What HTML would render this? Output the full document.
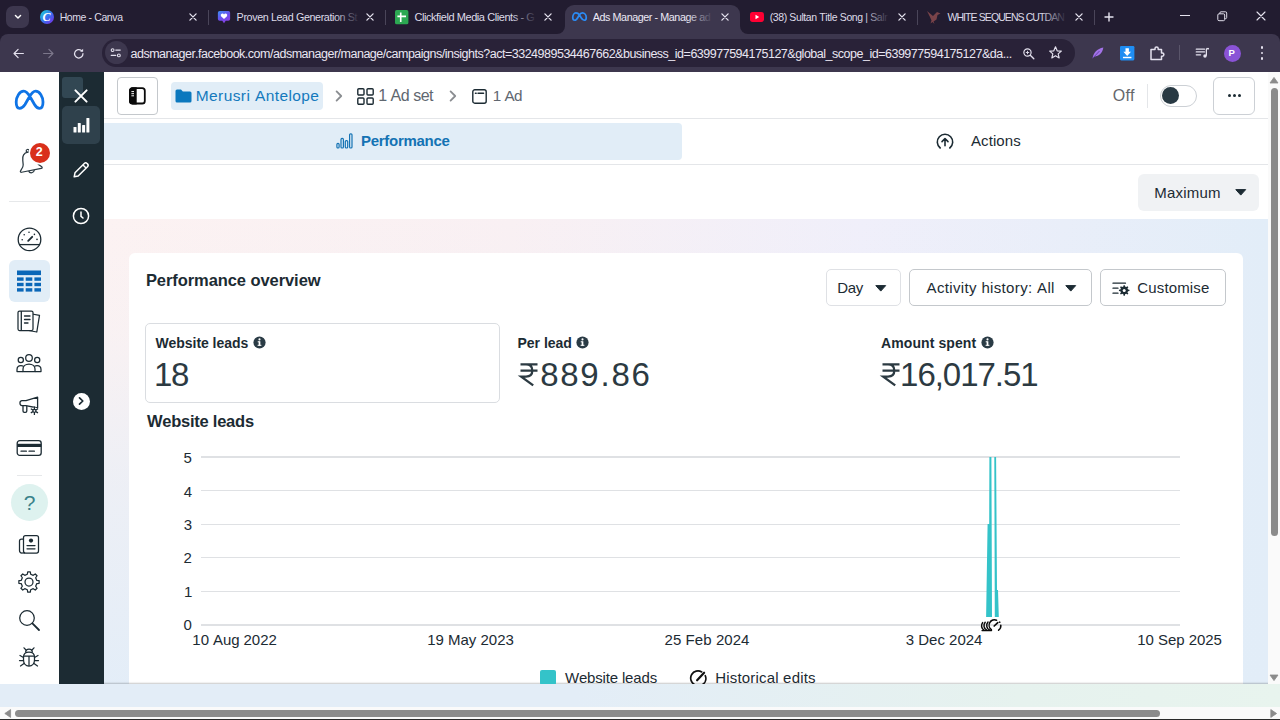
<!DOCTYPE html>
<html><head><meta charset="utf-8"><title>Ads Manager</title>
<style>
html,body{margin:0;padding:0;width:1280px;height:720px;overflow:hidden;background:#fff;font-family:"Liberation Sans",sans-serif;}
.a{position:absolute;}
.t{position:absolute;white-space:nowrap;font-kerning:none;font-variant-ligatures:none;font-family:"Liberation Sans",sans-serif;}
svg{position:absolute;overflow:visible;}
</style></head><body>
<div class="a" style="left:0;top:0;width:1280px;height:33.5px;background:#221c30"></div>
<div class="a" style="left:0;top:33.5px;width:1280px;height:38.7px;background:#3d374e"></div>
<div class="a" style="left:0;top:34px;width:8px;height:8px;background:#221c30"></div><div class="a" style="left:0;top:34px;width:16px;height:16px;border-radius:8px 0 0 0;background:#3d374e"></div>
<div class="a" style="left:1272px;top:34px;width:8px;height:8px;background:#221c30"></div><div class="a" style="left:1264px;top:34px;width:16px;height:16px;border-radius:0 8px 0 0;background:#3d374e"></div>
<div class="a" style="left:6px;top:6px;width:23px;height:22px;border-radius:7px;background:#3d374e"></div>
<svg style="left:13.6px;top:13.8px" width="8" height="6" viewBox="0 0 11 8"><path d="M2 1.8 L5.5 5.3 L9 1.8" fill="none" stroke="#fff" stroke-width="2" stroke-linecap="round" stroke-linejoin="round"/></svg>
<div class="a" style="left:565px;top:5px;width:175px;height:29px;border-radius:9px 9px 0 0;background:#3d374e"></div>
<svg style="left:557px;top:26px" width="8" height="8"><path d="M8 0 V8 H0 A8 8 0 0 0 8 0Z" fill="#3d374e"/></svg>
<svg style="left:740px;top:26px" width="8" height="8"><path d="M0 0 V8 H8 A8 8 0 0 1 0 0Z" fill="#3d374e"/></svg>
<div class="a" style="left:208px;top:10px;width:1px;height:15px;background:#4a4559"></div>
<div class="a" style="left:385px;top:10px;width:1px;height:15px;background:#4a4559"></div>
<div class="a" style="left:917px;top:10px;width:1px;height:15px;background:#4a4559"></div>
<div class="a" style="left:1094px;top:10px;width:1px;height:15px;background:#4a4559"></div>
<span class="t" style="left:59.64px;top:12.31px;font-size:10.5px;line-height:10.5px;font-weight:400;color:#dedbe8;letter-spacing:-0.394px;">Home - Canva</span>
<span class="t" style="left:236.62px;top:12.10px;font-size:10.75px;line-height:10.75px;font-weight:400;color:#dedbe8;letter-spacing:-0.388px;">Proven Lead Generation St</span>
<div class="a" style="left:334px;top:8px;width:26px;height:18px;background:linear-gradient(90deg,rgba(0,0,0,0),#221c30)"></div>
<span class="t" style="left:414.44px;top:11.89px;font-size:11.0px;line-height:11.0px;font-weight:400;color:#dedbe8;letter-spacing:-0.432px;">Clickfield Media Clients - G</span>
<div class="a" style="left:511px;top:8px;width:26px;height:18px;background:linear-gradient(90deg,rgba(0,0,0,0),#221c30)"></div>
<span class="t" style="left:592.78px;top:12.10px;font-size:10.75px;line-height:10.75px;font-weight:400;color:#ece9f5;letter-spacing:-0.426px;">Ads Manager - Manage ad</span>
<div class="a" style="left:687px;top:8px;width:26px;height:18px;background:linear-gradient(90deg,rgba(0,0,0,0),#3d374e)"></div>
<span class="t" style="left:769.65px;top:12.31px;font-size:10.5px;line-height:10.5px;font-weight:400;color:#dedbe8;letter-spacing:-0.384px;">(38) Sultan Title Song | Salr</span>
<div class="a" style="left:864px;top:8px;width:26px;height:18px;background:linear-gradient(90deg,rgba(0,0,0,0),#221c30)"></div>
<span class="t" style="left:947.45px;top:12.31px;font-size:10.5px;line-height:10.5px;font-weight:400;color:#dedbe8;letter-spacing:-0.913px;">WHITE SEQUENS CUTDAN</span>
<div class="a" style="left:1041px;top:8px;width:26px;height:18px;background:linear-gradient(90deg,rgba(0,0,0,0),#221c30)"></div>
<svg style="left:186.5px;top:11px" width="12" height="12" viewBox="-6 -6 12 12"><path d="M-3.1 -3.1 L3.1 3.1 M3.1 -3.1 L-3.1 3.1" stroke="#e6e3ef" stroke-width="1.3" stroke-linecap="round" fill="none"/></svg>
<svg style="left:364px;top:11px" width="12" height="12" viewBox="-6 -6 12 12"><path d="M-3.1 -3.1 L3.1 3.1 M3.1 -3.1 L-3.1 3.1" stroke="#e6e3ef" stroke-width="1.3" stroke-linecap="round" fill="none"/></svg>
<svg style="left:542px;top:11px" width="12" height="12" viewBox="-6 -6 12 12"><path d="M-3.1 -3.1 L3.1 3.1 M3.1 -3.1 L-3.1 3.1" stroke="#e6e3ef" stroke-width="1.3" stroke-linecap="round" fill="none"/></svg>
<svg style="left:719px;top:11px" width="12" height="12" viewBox="-6 -6 12 12"><path d="M-3.1 -3.1 L3.1 3.1 M3.1 -3.1 L-3.1 3.1" stroke="#e6e3ef" stroke-width="1.3" stroke-linecap="round" fill="none"/></svg>
<svg style="left:896px;top:11px" width="12" height="12" viewBox="-6 -6 12 12"><path d="M-3.1 -3.1 L3.1 3.1 M3.1 -3.1 L-3.1 3.1" stroke="#e6e3ef" stroke-width="1.3" stroke-linecap="round" fill="none"/></svg>
<svg style="left:1073px;top:11px" width="12" height="12" viewBox="-6 -6 12 12"><path d="M-3.1 -3.1 L3.1 3.1 M3.1 -3.1 L-3.1 3.1" stroke="#e6e3ef" stroke-width="1.3" stroke-linecap="round" fill="none"/></svg>
<svg style="left:1103px;top:11px" width="12" height="12" viewBox="-6 -6 12 12"><path d="M-4 0 H4 M0 -4 V4" stroke="#e6e3ef" stroke-width="1.4" stroke-linecap="round"/></svg>
<div class="a" style="left:1180px;top:15px;width:10px;height:1px;background:#e6e3ef"></div>
<svg style="left:1217.2px;top:10.8px" width="10.5" height="10.5" viewBox="0 0 13 13"><rect x="1" y="3.5" width="8.5" height="8.5" rx="1.5" fill="none" stroke="#e6e3ef" stroke-width="1.2"/><path d="M3.5 3.5 V2.5 A1.5 1.5 0 0 1 5 1 H10.5 A1.5 1.5 0 0 1 12 2.5 V8 A1.5 1.5 0 0 1 10.5 9.5 H9.5" fill="none" stroke="#e6e3ef" stroke-width="1.2"/></svg>
<svg style="left:1255.2px;top:10.3px" width="12" height="12" viewBox="-6 -6 12 12"><path d="M-4 -4 L4 4 M4 -4 L-4 4" stroke="#e6e3ef" stroke-width="1.1" stroke-linecap="round" fill="none"/></svg>
<div class="a" style="left:39.5px;top:10.2px;width:14px;height:14px;border-radius:50%;background:linear-gradient(135deg,#1ec8d8 10%,#3b6af0 55%,#7a2fe6 95%)"></div>
<span class="t" style="left:42.6px;top:9.8px;font-family:'Liberation Serif',serif;font-style:italic;font-weight:700;font-size:12px;line-height:14px;color:#fff">C</span>
<svg style="left:217.2px;top:9.6px" width="14" height="14.4" viewBox="0 0 16 16"><defs><linearGradient id="pl" x1="0" y1="0" x2="0.6" y2="1"><stop offset="0" stop-color="#3c8df2"/><stop offset=".55" stop-color="#6a4fee"/><stop offset="1" stop-color="#8a3fe0"/></linearGradient></defs><path d="M3 1 H13 A2 2 0 0 1 15 3 V10 A2 2 0 0 1 13 12 H10 L8 15 L6 12 H3 A2 2 0 0 1 1 10 V3 A2 2 0 0 1 3 1Z" fill="url(#pl)"/><path d="M8 10.2 L4.6 6.8 A1.9 1.9 0 0 1 8 4.8 A1.9 1.9 0 0 1 11.4 6.8Z" fill="#fff"/></svg>
<svg style="left:395px;top:9.7px" width="13.4" height="14.4" viewBox="0 0 14 15"><rect x="0" y="0" width="14" height="15" rx="1.8" fill="#2ca852"/><path d="M2.5 6.6 H11.5 M6 2.6 V12.4" stroke="#fff" stroke-width="1.7"/></svg>
<svg style="left:572px;top:10px" width="15" height="13" viewBox="0 1.5 20 13"><path d="M5.2 3.2 C2.6 3.2 1 6.3 1 9.4 C1 11.6 2 13 3.7 13 C5.4 13 6.5 11.6 8.2 8.6 L9.3 6.7 C10.6 4.5 11.9 3.2 13.9 3.2 C16.7 3.2 19 6.1 19 9.6 C19 11.7 17.9 13 16.2 13 C14.6 13 13.7 12.1 12.2 9.6 L10 6 C8.6 3.9 7.2 3.2 5.2 3.2Z" fill="none" stroke="#2b8cf5" stroke-width="2.3" stroke-linejoin="round"/></svg>
<svg style="left:750px;top:12px" width="14" height="10" viewBox="0 0 17 12"><rect x="0" y="0" width="17" height="12" rx="3.2" fill="#ff0033"/><path d="M6.7 3.3 L11.2 6 L6.7 8.7Z" fill="#fff"/></svg>
<svg style="left:926px;top:9px" width="16" height="16" viewBox="0 0 16 16"><path d="M1 2 L7 7 L11 3 L14.5 4.5 L11.5 6 L10.5 10.5 L7.5 12.5 L8.5 15 L6.5 13 L4.5 14.5 L5.5 11.5 L4 8 Z" fill="#7a4349"/></svg>
<svg style="left:12px;top:46.8px" width="13" height="13" viewBox="0 0 16 16"><path d="M14 8 H3 M7.5 3 L2.5 8 L7.5 13" fill="none" stroke="#e4e1ee" stroke-width="1.5" stroke-linecap="round" stroke-linejoin="round"/></svg>
<svg style="left:41.5px;top:46.8px" width="13" height="13" viewBox="0 0 16 16"><path d="M2 8 H13 M8.5 3 L13.5 8 L8.5 13" fill="none" stroke="#7c778b" stroke-width="1.5" stroke-linecap="round" stroke-linejoin="round"/></svg>
<svg style="left:71.8px;top:46.5px" width="13.5" height="13.5" viewBox="0 0 16 16"><path d="M13 8 A5 5 0 1 1 11.2 4.2" fill="none" stroke="#e4e1ee" stroke-width="1.5" stroke-linecap="round"/><path d="M13.2 2 V5.6 H9.6Z" fill="#e4e1ee"/></svg>
<div class="a" style="left:102px;top:38.8px;width:972.5px;height:28.2px;border-radius:14.1px;background:#292238"></div>
<div class="a" style="left:104.5px;top:41.3px;width:23px;height:23px;border-radius:12px;background:#3d374e"></div>
<svg style="left:110px;top:47.2px" width="11.5" height="11.5" viewBox="0 0 14 14"><circle cx="3.2" cy="3.8" r="1.7" fill="none" stroke="#e4e1ee" stroke-width="1.3"/><path d="M7 3.8 H12.5" stroke="#e4e1ee" stroke-width="1.4" stroke-linecap="round"/><circle cx="10.8" cy="10.2" r="1.7" fill="none" stroke="#e4e1ee" stroke-width="1.3"/><path d="M1.5 10.2 H7" stroke="#e4e1ee" stroke-width="1.4" stroke-linecap="round"/></svg>
<span class="t" style="left:130.47px;top:47.62px;font-size:12.5px;line-height:12.5px;font-weight:400;color:#e9e6f2;letter-spacing:-0.490px;">adsmanager.facebook.com/adsmanager/manage/campaigns/insights?act=3324989534467662&amp;business_id=639977594175127&amp;global_scope_id=639977594175127&amp;da...</span>
<svg style="left:1022px;top:46.5px" width="13.5" height="13.5" viewBox="0 0 16 16"><circle cx="6.5" cy="6.5" r="4.3" fill="none" stroke="#e4e1ee" stroke-width="1.4"/><path d="M9.8 9.8 L14 14" stroke="#e4e1ee" stroke-width="1.6" stroke-linecap="round"/><path d="M4.5 6.5 H8.5 M6.5 4.5 V8.5" stroke="#e4e1ee" stroke-width="1.1"/></svg>
<svg style="left:1047.6px;top:45.4px" width="15" height="15" viewBox="0 0 18 18"><path d="M9 2.2 L11 7 L16 7.4 L12.2 10.7 L13.4 15.6 L9 13 L4.6 15.6 L5.8 10.7 L2 7.4 L7 7Z" fill="none" stroke="#e4e1ee" stroke-width="1.4" stroke-linejoin="round"/></svg>
<svg style="left:1089.5px;top:45px" width="15.5" height="15.5" viewBox="0 0 18 18"><path d="M3 15.5 C4 9 8 4.5 15.5 3 C14.5 9.5 10.5 13 5 13.5 L3 15.5Z" fill="#a373e8"/><path d="M3 15.5 L11 7" stroke="#5a3aa0" stroke-width="1"/></svg>
<svg style="left:1120px;top:45.6px" width="14.4" height="14.4" viewBox="0 0 17 16" preserveAspectRatio="none"><rect width="17" height="16" rx="1.5" fill="#1f8df2"/><path d="M6.5 2.5 H10.5 V6.5 H13 L8.5 11 L4 6.5 H6.5Z" fill="#fff"/><rect x="3.5" y="12" width="10" height="1.6" fill="#fff"/></svg>
<svg style="left:1148px;top:44px" width="18" height="18" viewBox="0 0 18 18"><path d="M3 5.5 H7 V4.5 A1.6 1.6 0 0 1 10.2 4.5 V5.5 H13.5 V9 H14.3 A1.6 1.6 0 0 1 14.3 12.2 H13.5 V15.5 H3Z" fill="none" stroke="#e4e1ee" stroke-width="1.5" stroke-linejoin="round"/></svg>
<div class="a" style="left:1179px;top:45px;width:1px;height:15px;background:#5a556a"></div>
<svg style="left:1195px;top:46px" width="15.5" height="14" viewBox="0 0 18 16"><path d="M1.5 3.5 H11 M1.5 6.8 H11 M1.5 10.1 H6.5" stroke="#e4e1ee" stroke-width="1.5" stroke-linecap="round"/><path d="M13.2 3 V11.2" stroke="#e4e1ee" stroke-width="1.5"/><path d="M13.2 3 H16.2" stroke="#e4e1ee" stroke-width="1.8"/><circle cx="11.6" cy="11.4" r="2" fill="#e4e1ee"/></svg>
<div class="a" style="left:1223.5px;top:44.5px;width:17px;height:17px;border-radius:50%;background:#8a53d6"></div>
<span class="t" style="left:1228.56px;top:48.36px;font-size:9.5px;line-height:9.5px;font-weight:700;color:#fff;letter-spacing:0.000px;">P</span>
<div class="a" style="left:1260.5px;top:46.3px;width:2.6px;height:2.6px;border-radius:50%;background:#e4e1ee"></div>
<div class="a" style="left:1260.5px;top:51.8px;width:2.6px;height:2.6px;border-radius:50%;background:#e4e1ee"></div>
<div class="a" style="left:1260.5px;top:57.3px;width:2.6px;height:2.6px;border-radius:50%;background:#e4e1ee"></div>
<div class="a" style="left:0;top:72px;width:1280px;height:648px;background:#fff"></div>
<div class="a" style="left:104px;top:219px;width:1164px;height:465px;background:linear-gradient(90deg,#fcf2f2 0%,#f9f0f3 35%,#f0effa 65%,#e2edf8 100%)"></div>
<div class="a" style="left:104px;top:219px;width:1164px;height:465px;background:linear-gradient(180deg,rgba(226,237,248,0) 0%,rgba(226,237,248,.12) 25%,rgba(226,237,248,.55) 55%,rgba(226,237,248,.95) 100%)"></div>
<div class="a" style="left:129px;top:253px;width:1114px;height:440px;border-radius:6px 6px 0 0;background:#fff"></div>
<div class="a" style="left:0;top:684px;width:1280px;height:23px;background:linear-gradient(90deg,#e3edf7 0%,#e3edf7 45%,#e6f2ee 80%,#e8f4ee 100%);box-shadow:0 -1px 1.5px rgba(0,0,0,.22)"></div>
<div class="a" style="left:0;top:707px;width:1280px;height:13px;background:#fafafa"></div>
<div class="a" style="left:15px;top:709.8px;width:1145px;height:7px;border-radius:3.5px;background:#8b8b8b"></div>
<svg style="left:3.5px;top:709px" width="8" height="9"><path d="M6.6 0.6 V8.4 L0.8 4.5Z" fill="#8b8b8b" stroke="#8b8b8b" stroke-width=".8" stroke-linejoin="round"/></svg>
<svg style="left:1269.5px;top:709px" width="8" height="9"><path d="M0.8 0.6 V8.4 L6.6 4.5Z" fill="#8b8b8b" stroke="#8b8b8b" stroke-width=".8" stroke-linejoin="round"/></svg>
<div class="a" style="left:0;top:719px;width:1280px;height:1px;background:#2a2a2a"></div>
<div class="a" style="left:1268px;top:72px;width:12px;height:612px;background:#fafafa"></div>
<div class="a" style="left:1270.5px;top:88px;width:7px;height:448px;border-radius:3.5px;background:#8b8b8b"></div>
<svg style="left:1269px;top:76px" width="10" height="8"><path d="M1 7 H9 L5 1.4Z" fill="#8b8b8b" stroke="#8b8b8b" stroke-width=".8" stroke-linejoin="round"/></svg>
<svg style="left:1269px;top:673.6px" width="10" height="8"><path d="M1 1 H9 L5 6.6Z" fill="#8b8b8b" stroke="#8b8b8b" stroke-width=".8" stroke-linejoin="round"/></svg>
<div class="a" style="left:0;top:72px;width:59px;height:612px;background:#fff"></div>
<svg style="left:0px;top:0px" width="60" height="120" viewBox="0 0 60 120"><path d="M19.6 108.3 C17.3 108.3 16.2 105.5 16.2 102 C16.2 97 19.5 91.2 23.7 91.2 C26.5 91.2 28.5 94 30.5 97.5 L34.5 104.5 C36 107 37.5 108.3 39.6 108.3 C42 108.3 43 105.5 43 102 C43 97 39.8 91.2 35.6 91.2 C32.8 91.2 31 94 29 97.5 L25 104.5 C23.4 107 21.8 108.3 19.6 108.3Z" fill="none" stroke="#0f74e6" stroke-width="2.8" stroke-linejoin="round"/></svg>
<svg style="left:17.3px;top:147.5px" width="26" height="30" viewBox="0 0 26 30"><g transform="rotate(-11 13 15) translate(13 15) scale(1.1) translate(-13 -15)" fill="none" stroke="#2b3a42" stroke-width="1.15" stroke-linejoin="round"><path d="M13 5 C9 5 7.2 8.2 7 11.5 L6.6 15.5 C6.4 17.5 4.6 19 3.2 20.4 C2.6 21 3 21.8 3.9 21.8 H22.1 C23 21.8 23.4 21 22.8 20.4 C21.4 19 19.6 17.5 19.4 15.5 L19 11.5 C18.8 8.2 17 5 13 5Z"/><circle cx="13" cy="3.8" r="1.3"/><path d="M10.4 22 A2.7 2.7 0 0 0 15.6 22"/></g></svg>
<div class="a" style="left:29.5px;top:142.5px;width:20px;height:20px;border-radius:50%;background:#d9301b;box-shadow:0 0 0 1.5px #fff"></div>
<span class="t" style="left:35.87px;top:146.22px;font-size:12.5px;line-height:12.5px;font-weight:700;color:#fff;letter-spacing:0.000px;">2</span>
<div class="a" style="left:9px;top:201px;width:41px;height:1px;background:#e6e8ea"></div>
<svg style="left:16px;top:226px" width="27" height="27" viewBox="0 0 27 27"><circle cx="13.5" cy="13.4" r="11.3" fill="none" stroke="#1c2b33" stroke-width="1.3"/><path d="M3.4 18.6 H23.6" stroke="#1c2b33" stroke-width="1.3"/><path d="M12.2 14.8 L16.2 10.8" stroke="#1c2b33" stroke-width="1.9" stroke-linecap="round"/><g fill="#1c2b33"><circle cx="6.2" cy="13.8" r=".8"/><circle cx="8.2" cy="8.8" r=".8"/><circle cx="13" cy="6.2" r=".8"/><circle cx="18.4" cy="8.4" r=".8"/><circle cx="21" cy="13.4" r=".8"/></g></svg>
<div class="a" style="left:9px;top:260px;width:41px;height:42px;border-radius:6px;background:#e1edf7"></div>
<svg style="left:17px;top:270px" width="24" height="23" viewBox="0 0 24 23"><rect x="0" y="0.5" width="24" height="4.6" fill="#0b67b8"/><rect x="0" y="7.4" width="6.6" height="3.4" fill="#0b67b8"/><rect x="8.7" y="7.4" width="6.6" height="3.4" fill="#0b67b8"/><rect x="17.4" y="7.4" width="6.6" height="3.4" fill="#0b67b8"/><rect x="0" y="12.8" width="6.6" height="3.4" fill="#0b67b8"/><rect x="8.7" y="12.8" width="6.6" height="3.4" fill="#0b67b8"/><rect x="17.4" y="12.8" width="6.6" height="3.4" fill="#0b67b8"/><rect x="0" y="18.2" width="6.6" height="3.4" fill="#0b67b8"/><rect x="8.7" y="18.2" width="6.6" height="3.4" fill="#0b67b8"/><rect x="17.4" y="18.2" width="6.6" height="3.4" fill="#0b67b8"/></svg>
<svg style="left:15px;top:308px" width="28" height="28" viewBox="0 0 28 28"><path d="M17 6 L24.5 7.4 L21.8 24 L11 22" fill="none" stroke="#1c2b33" stroke-width="1.25" stroke-linejoin="round"/><rect x="3" y="3" width="15" height="19.5" rx="1.5" fill="#fff" stroke="#1c2b33" stroke-width="1.25"/><path d="M6.3 3 V22.5" stroke="#1c2b33" stroke-width="1.3"/><path d="M9.5 8 H15 M9.5 11.5 H15 M9.5 15 H13" stroke="#1c2b33" stroke-width="1.3" stroke-linecap="round"/></svg>
<svg style="left:15px;top:352px" width="28" height="22" viewBox="0 0 28 22"><circle cx="14" cy="6" r="3.3" fill="none" stroke="#1c2b33" stroke-width="1.25"/><circle cx="5.8" cy="8" r="2.6" fill="none" stroke="#1c2b33" stroke-width="1.25"/><circle cx="22.2" cy="8" r="2.6" fill="none" stroke="#1c2b33" stroke-width="1.25"/><path d="M8 19.5 V17 C8 14 10.5 12 14 12 C17.5 12 20 14 20 17 V19.5Z" fill="none" stroke="#1c2b33" stroke-width="1.25" stroke-linejoin="round"/><path d="M8 19.5 H2 V17.5 C2 15 3.8 13.5 6 13.5 C7 13.5 7.8 13.8 8.5 14.2 M20 19.5 H26 V17.5 C26 15 24.2 13.5 22 13.5 C21 13.5 20.2 13.8 19.5 14.2" fill="none" stroke="#1c2b33" stroke-width="1.25" stroke-linejoin="round"/></svg>
<svg style="left:18px;top:394px" width="24" height="24" viewBox="0 0 24 24"><path d="M4 6.6 H8 L19.6 3.2 V14 L8 11.6 H4 C2.9 11.6 2 10.7 2 9.6 V8.6 C2 7.5 2.9 6.6 4 6.6Z" fill="none" stroke="#1c2b33" stroke-width="1.3" stroke-linejoin="round"/><path d="M5 11.8 V17 C5 17.8 5.6 18.4 6.4 18.4 H7.4 C8.2 18.4 8.8 17.8 8.8 17 V12" fill="none" stroke="#1c2b33" stroke-width="1.3" stroke-linejoin="round"/><g transform="translate(16.4 16.8)"><circle r="3.4" fill="#fff"/><circle r="2.1" fill="#1c2b33"/><path d="M0 -4.2 V4.2 M-3.6 -2.1 L3.6 2.1 M-3.6 2.1 L3.6 -2.1" stroke="#1c2b33" stroke-width="1.25"/><circle r=".9" fill="#fff"/></g></svg>
<svg style="left:16px;top:438px" width="26" height="20" viewBox="0 0 26 20"><rect x="1.2" y="2.6" width="24" height="14.8" rx="2.6" fill="none" stroke="#1c2b33" stroke-width="1.3"/><rect x="1.2" y="5.8" width="24" height="3.2" fill="#1c2b33"/><path d="M5 13.2 H10.4 M13 13.2 H18.4" stroke="#1c2b33" stroke-width="1.25" stroke-linecap="round"/></svg>
<div class="a" style="left:17px;top:475px;width:25px;height:1px;background:#e6e8ea"></div>
<div class="a" style="left:11px;top:484px;width:37px;height:37px;border-radius:50%;background:#def2ef"></div>
<span class="t" style="left:23.74px;top:491.72px;font-size:21px;line-height:21px;font-weight:400;color:#3a828a;letter-spacing:0.000px;">?</span>
<svg style="left:17px;top:532px" width="24" height="24" viewBox="0 0 24 24"><path d="M6.5 7 H4.5 C3.4 7 2.5 7.9 2.5 9 V18.5 C2.5 19.9 3.6 21 5 21" fill="none" stroke="#1c2b33" stroke-width="1.25"/><rect x="6.5" y="3.5" width="15" height="17.5" rx="2" fill="none" stroke="#1c2b33" stroke-width="1.25"/><path d="M5 21 H8" stroke="#1c2b33" stroke-width="1.25"/><circle cx="14" cy="8.6" r="2.1" fill="#1c2b33"/><path d="M10 13.5 H18 M10 16.8 H18" stroke="#1c2b33" stroke-width="1.25" stroke-linecap="round"/></svg>
<svg style="left:17px;top:570px" width="24" height="24" viewBox="0 0 24 24"><path d="M10.28 4.29 L10.72 1.88 L13.28 1.88 L13.72 4.29 L16.23 5.33 L18.25 3.94 L20.06 5.75 L18.67 7.77 L19.71 10.28 L22.12 10.72 L22.12 13.28 L19.71 13.72 L18.67 16.23 L20.06 18.25 L18.25 20.06 L16.23 18.67 L13.72 19.71 L13.28 22.12 L10.72 22.12 L10.28 19.71 L7.77 18.67 L5.75 20.06 L3.94 18.25 L5.33 16.23 L4.29 13.72 L1.88 13.28 L1.88 10.72 L4.29 10.28 L5.33 7.77 L3.94 5.75 L5.75 3.94 L7.77 5.33Z" fill="none" stroke="#1c2b33" stroke-width="1.25" stroke-linejoin="round"/><circle cx="12" cy="12" r="4" fill="none" stroke="#1c2b33" stroke-width="1.25"/></svg>
<svg style="left:17px;top:608px" width="24" height="24" viewBox="0 0 24 24"><circle cx="10" cy="10" r="7.3" fill="none" stroke="#1c2b33" stroke-width="1.25"/><path d="M15.4 15.4 L22 22" stroke="#1c2b33" stroke-width="1.8" stroke-linecap="round"/></svg>
<svg style="left:17px;top:645px" width="24" height="24" viewBox="0 0 24 24"><path d="M6.5 12 C6.5 8.5 8.8 7 12 7 C15.2 7 17.5 8.5 17.5 12 V15 C17.5 18.5 15.2 21 12 21 C8.8 21 6.5 18.5 6.5 15Z" fill="none" stroke="#1c2b33" stroke-width="1.25"/><path d="M12 10.5 V21 M6.8 11 H17.2" stroke="#1c2b33" stroke-width="1.25"/><path d="M8.6 7.6 C8.6 5.5 10 4 12 4 C14 4 15.4 5.5 15.4 7.6" fill="none" stroke="#1c2b33" stroke-width="1.25"/><path d="M6.5 12.5 L3 10.5 M6.5 15.5 H2.5 M7 18.5 L3.5 21 M17.5 12.5 L21 10.5 M17.5 15.5 H21.5 M17 18.5 L20.5 21 M9 5 L7 2.8 M15 5 L17 2.8" stroke="#1c2b33" stroke-width="1.25" stroke-linecap="round"/></svg>
<div class="a" style="left:59px;top:72px;width:45px;height:612px;background:#1c2b33"></div>
<div class="a" style="left:62px;top:77px;width:21px;height:21px;border-radius:3px;background:#324753"></div>
<svg style="left:73px;top:88px" width="16" height="16" viewBox="-8 -8 16 16"><path d="M-5.6 -5.6 L5.6 5.6 M5.6 -5.6 L-5.6 5.6" stroke="#fff" stroke-width="2" stroke-linecap="round"/></svg>
<div class="a" style="left:62px;top:106px;width:38px;height:38px;border-radius:5px;background:#2f414c"></div>
<svg style="left:73px;top:117px" width="17" height="16" viewBox="0 0 17 16"><rect x="0.5" y="10" width="3" height="5.5" rx=".6" fill="#fff"/><rect x="4.8" y="6" width="3" height="9.5" rx=".6" fill="#fff"/><rect x="9.1" y="8" width="3" height="7.5" rx=".6" fill="#fff"/><rect x="13.4" y="1" width="3" height="14.5" rx=".6" fill="#fff"/></svg>
<svg style="left:72px;top:161px" width="18" height="18" viewBox="0 0 18 18"><path d="M2.2 15.8 L3 11.8 L12.3 2.5 C13.1 1.7 14.3 1.7 15.1 2.5 L15.5 2.9 C16.3 3.7 16.3 4.9 15.5 5.7 L6.2 15 Z" fill="none" stroke="#fff" stroke-width="1.5" stroke-linejoin="round"/><path d="M11 4 L14 7" stroke="#fff" stroke-width="1.4"/></svg>
<svg style="left:72px;top:207px" width="18" height="18" viewBox="0 0 18 18"><circle cx="9" cy="9" r="7.6" fill="none" stroke="#fff" stroke-width="1.5"/><path d="M9 5 V9.3 L11 11" fill="none" stroke="#fff" stroke-width="1.5" stroke-linecap="round"/></svg>
<div class="a" style="left:72.5px;top:392.5px;width:17px;height:17px;border-radius:50%;background:#fff"></div>
<svg style="left:77px;top:396px" width="8" height="10" viewBox="0 0 8 10"><path d="M2.5 1.8 L5.8 5 L2.5 8.2" fill="none" stroke="#1c2b33" stroke-width="1.7" stroke-linecap="round" stroke-linejoin="round"/></svg>
<div class="a" style="left:104px;top:118px;width:1164px;height:1px;background:#e4e6e9"></div>
<div class="a" style="left:104px;top:164px;width:1164px;height:1px;background:#e4e6e9"></div>
<div class="a" style="left:117px;top:77px;width:41px;height:37.6px;box-sizing:border-box;border:1px solid #c4c8cc;border-radius:4px;background:#fff"></div>
<svg style="left:128px;top:87px" width="18" height="18" viewBox="0 0 18 18"><rect x="1.9" y="1.1" width="14.9" height="15.4" rx="2.6" fill="#fff" stroke="#0b0b0b" stroke-width="1.8"/><path d="M1.9 3.7 A2.6 2.6 0 0 1 4.5 1.1 H7.8 V16.5 H4.5 A2.6 2.6 0 0 1 1.9 13.9Z" fill="#0b0b0b" stroke="#0b0b0b" stroke-width="1.8"/><path d="M3.4 4.6 H6 M3.4 6.7 H6 M3.4 8.8 H6" stroke="#fff" stroke-width="1"/></svg>
<div class="a" style="left:171px;top:82px;width:152px;height:28px;border-radius:4px;background:#e1edf7"></div>
<svg style="left:175px;top:89px" width="17" height="14" viewBox="0 0 17 14"><path d="M0.5 2 A1.5 1.5 0 0 1 2 0.5 H6 L7.8 2.5 H15 A1.5 1.5 0 0 1 16.5 4 V12 A1.5 1.5 0 0 1 15 13.5 H2 A1.5 1.5 0 0 1 0.5 12Z" fill="#0b78be"/></svg>
<span class="t" style="left:195.73px;top:88.28px;font-size:15.5px;line-height:15.5px;font-weight:400;color:#1479bd;letter-spacing:0.406px;">Merusri Antelope</span>
<svg style="left:334.7px;top:90px" width="8" height="12" viewBox="0 0 8 12"><path d="M1.6 1.4 L6.2 6 L1.6 10.6" fill="none" stroke="#8a8d91" stroke-width="1.8" stroke-linecap="round" stroke-linejoin="round"/></svg>
<svg style="left:357px;top:87.5px" width="17" height="17" viewBox="0 0 17 17"><rect x="0.8" y="0.8" width="6.2" height="6.2" rx="1" fill="none" stroke="#1c2b33" stroke-width="1.4"/><rect x="10" y="0.8" width="6.2" height="6.2" rx="1" fill="none" stroke="#1c2b33" stroke-width="1.4"/><rect x="0.8" y="10" width="6.2" height="6.2" rx="1" fill="none" stroke="#1c2b33" stroke-width="1.4"/><rect x="10" y="10" width="6.2" height="6.2" rx="1" fill="none" stroke="#1c2b33" stroke-width="1.4"/></svg>
<span class="t" style="left:378.28px;top:87.86px;font-size:16px;line-height:16px;font-weight:400;color:#606770;letter-spacing:-0.495px;">1 Ad set</span>
<svg style="left:449.3px;top:90px" width="8" height="12" viewBox="0 0 8 12"><path d="M1.6 1.4 L6.2 6 L1.6 10.6" fill="none" stroke="#8a8d91" stroke-width="1.8" stroke-linecap="round" stroke-linejoin="round"/></svg>
<svg style="left:472px;top:88.5px" width="15" height="15" viewBox="0 0 15 15"><rect x="0.8" y="0.8" width="13.4" height="13.4" rx="2" fill="none" stroke="#1c2b33" stroke-width="1.4"/><path d="M3.4 4.2 H4.2 M6 4.2 H11.6" stroke="#1c2b33" stroke-width="1.4" stroke-linecap="round"/></svg>
<span class="t" style="left:492.74px;top:88.49px;font-size:15.25px;line-height:15.25px;font-weight:400;color:#606770;letter-spacing:-0.509px;">1 Ad</span>
<span class="t" style="left:1112.84px;top:87.86px;font-size:16px;line-height:16px;font-weight:400;color:#65676b;letter-spacing:0.199px;">Off</span>
<div class="a" style="left:1147px;top:84px;width:1px;height:24px;background:#e4e6e9"></div>
<div class="a" style="left:1159.5px;top:85px;width:37px;height:21.5px;box-sizing:border-box;border:1px solid #ccd0d5;border-radius:11px;background:#fff"></div>
<div class="a" style="left:1162px;top:87.2px;width:17px;height:17px;border-radius:50%;background:#283943"></div>
<div class="a" style="left:1213px;top:76.5px;width:42px;height:38px;box-sizing:border-box;border:1px solid #ccd0d5;border-radius:6px;background:#fff"></div>
<div class="a" style="left:1227.5px;top:94.3px;width:3px;height:3px;border-radius:50%;background:#1c2b33"></div>
<div class="a" style="left:1232.5px;top:94.3px;width:3px;height:3px;border-radius:50%;background:#1c2b33"></div>
<div class="a" style="left:1237.5px;top:94.3px;width:3px;height:3px;border-radius:50%;background:#1c2b33"></div>
<div class="a" style="left:104px;top:123px;width:578px;height:36.6px;border-radius:0 4px 4px 0;background:#e1edf7"></div>
<svg style="left:336px;top:133px" width="17" height="16" viewBox="0 0 17 16"><rect x="0.9" y="10.4" width="2.2" height="4.6" rx="1" fill="none" stroke="#1473b4" stroke-width="1.2"/><rect x="5" y="5.4" width="2.4" height="9.6" rx="1" fill="none" stroke="#1473b4" stroke-width="1.2"/><rect x="9.3" y="7.6" width="2.4" height="7.4" rx="1" fill="none" stroke="#1473b4" stroke-width="1.2"/><rect x="13.6" y="0.8" width="2.4" height="14.2" rx="1" fill="none" stroke="#1473b4" stroke-width="1.2"/></svg>
<span class="t" style="left:361.00px;top:133.30px;font-size:15px;line-height:15px;font-weight:700;color:#1473b4;letter-spacing:-0.289px;">Performance</span>
<svg style="left:935.3px;top:131.6px" width="20" height="20" viewBox="-10 -10 20 20"><path d="M-4.8 6 A7.7 7.7 0 1 1 4.8 6" fill="none" stroke="#1c2b33" stroke-width="1.6" stroke-linecap="round"/><path d="M0 3.8 V-3.2 M-3 -0.4 L0 -3.5 L3 -0.4" fill="none" stroke="#1c2b33" stroke-width="1.6" stroke-linecap="round" stroke-linejoin="round"/></svg>
<span class="t" style="left:970.97px;top:133.30px;font-size:15px;line-height:15px;font-weight:400;color:#1c2b33;letter-spacing:0.097px;">Actions</span>
<div class="a" style="left:1138px;top:173.5px;width:121px;height:37px;border-radius:6px;background:#f0f2f4"></div>
<span class="t" style="left:1154.27px;top:184.70px;font-size:15px;line-height:15px;font-weight:400;color:#1c2b33;letter-spacing:0.219px;">Maximum</span>
<svg style="left:1234.75px;top:189.05px" width="11.5" height="6.5" viewBox="0 0 11.5 6.5"><path d="M0.8 0.6 H10.7 L5.75 6.1Z" fill="#1c2b33" stroke="#1c2b33" stroke-width="1" stroke-linejoin="round"/></svg>
<span class="t" style="left:145.90px;top:271.83px;font-size:16.5px;line-height:16.5px;font-weight:700;color:#1c2b33;letter-spacing:-0.074px;">Performance overview</span>
<div class="a" style="left:825.5px;top:269px;width:75.0px;height:37px;box-sizing:border-box;border:1px solid #dfe1e5;border-radius:5px;background:#fff"></div>
<div class="a" style="left:909px;top:269px;width:183px;height:37px;box-sizing:border-box;border:1px solid #c4c8cc;border-radius:5px;background:#fff"></div>
<div class="a" style="left:1099.5px;top:269px;width:126.5px;height:37px;box-sizing:border-box;border:1px solid #c4c8cc;border-radius:5px;background:#fff"></div>
<span class="t" style="left:837.37px;top:280.30px;font-size:15px;line-height:15px;font-weight:400;color:#1c2b33;letter-spacing:-0.358px;">Day</span>
<svg style="left:874.75px;top:284.75px" width="11.5" height="6.5" viewBox="0 0 11.5 6.5"><path d="M0.8 0.6 H10.7 L5.75 6.1Z" fill="#1c2b33" stroke="#1c2b33" stroke-width="1" stroke-linejoin="round"/></svg>
<span class="t" style="left:926.57px;top:280.30px;font-size:15px;line-height:15px;font-weight:400;color:#1c2b33;letter-spacing:0.349px;">Activity history: All</span>
<svg style="left:1064.85px;top:284.75px" width="11.5" height="6.5" viewBox="0 0 11.5 6.5"><path d="M0.8 0.6 H10.7 L5.75 6.1Z" fill="#1c2b33" stroke="#1c2b33" stroke-width="1" stroke-linejoin="round"/></svg>
<svg style="left:1112px;top:281px" width="18" height="15" viewBox="0 0 18 15"><path d="M1 2.2 H13.5 M1 7.2 H6 M1 12.2 H6" stroke="#1c2b33" stroke-width="1.3" stroke-linecap="round"/><path d="M11.35 5.59 L11.54 4.14 L12.86 4.14 L13.05 5.59 L14.29 6.11 L15.45 5.21 L16.39 6.15 L15.49 7.31 L16.01 8.55 L17.46 8.74 L17.46 10.06 L16.01 10.25 L15.49 11.49 L16.39 12.65 L15.45 13.59 L14.29 12.69 L13.05 13.21 L12.86 14.66 L11.54 14.66 L11.35 13.21 L10.11 12.69 L8.95 13.59 L8.01 12.65 L8.91 11.49 L8.39 10.25 L6.94 10.06 L6.94 8.74 L8.39 8.55 L8.91 7.31 L8.01 6.15 L8.95 5.21 L10.11 6.11Z" fill="#1c2b33"/><circle cx="12.2" cy="9.4" r="1.5" fill="#fff"/></svg>
<span class="t" style="left:1137.24px;top:280.30px;font-size:15px;line-height:15px;font-weight:400;color:#1c2b33;letter-spacing:0.159px;">Customise</span>
<div class="a" style="left:145px;top:323px;width:355px;height:80px;box-sizing:border-box;border:1px solid #dadde1;border-radius:5px;background:#fff"></div>
<span class="t" style="left:155.39px;top:335.65px;font-size:14px;line-height:14px;font-weight:700;color:#1c2b33;letter-spacing:-0.040px;">Website leads</span>
<svg style="left:252.8px;top:335.9px" width="13" height="13" viewBox="-6.5 -6.5 13 13"><circle r="6.1" fill="#2a3b45"/><circle cx="0" cy="-3.1" r="1.05" fill="#fff"/><rect x="-0.85" y="-1.2" width="1.7" height="4.4" fill="#fff"/><rect x="-1.8" y="-1.2" width="1.8" height="1" fill="#fff"/><rect x="-1.9" y="2.3" width="3.8" height="1" fill="#fff"/></svg>
<span class="t" style="left:517.46px;top:335.65px;font-size:14px;line-height:14px;font-weight:700;color:#1c2b33;letter-spacing:-0.002px;">Per lead</span>
<svg style="left:576.0px;top:335.9px" width="13" height="13" viewBox="-6.5 -6.5 13 13"><circle r="6.1" fill="#2a3b45"/><circle cx="0" cy="-3.1" r="1.05" fill="#fff"/><rect x="-0.85" y="-1.2" width="1.7" height="4.4" fill="#fff"/><rect x="-1.8" y="-1.2" width="1.8" height="1" fill="#fff"/><rect x="-1.9" y="2.3" width="3.8" height="1" fill="#fff"/></svg>
<span class="t" style="left:881.05px;top:335.65px;font-size:14px;line-height:14px;font-weight:700;color:#1c2b33;letter-spacing:0.092px;">Amount spent</span>
<svg style="left:980.5px;top:335.9px" width="13" height="13" viewBox="-6.5 -6.5 13 13"><circle r="6.1" fill="#2a3b45"/><circle cx="0" cy="-3.1" r="1.05" fill="#fff"/><rect x="-0.85" y="-1.2" width="1.7" height="4.4" fill="#fff"/><rect x="-1.8" y="-1.2" width="1.8" height="1" fill="#fff"/><rect x="-1.9" y="2.3" width="3.8" height="1" fill="#fff"/></svg>
<span class="t" style="left:153.99px;top:357.87px;font-size:33px;line-height:33px;font-weight:400;color:#2c3a42;letter-spacing:-1.258px;">18</span>
<svg style="left:520.2px;top:363.2px" width="18" height="23" viewBox="0 0 18 23" preserveAspectRatio="none"><path d="M0.5 1.4 H17.5 M0.5 7.6 H17.5 M0.5 1.4 H6 C10.2 1.4 12.3 4 12.3 7.6 C12.3 11.2 10.2 13.6 6 13.6 H1.2 L13.2 22.4" fill="none" stroke="#2c3a42" stroke-width="2.3" stroke-linejoin="miter"/></svg>
<span class="t" style="left:540.17px;top:357.87px;font-size:33px;line-height:33px;font-weight:400;color:#2c3a42;letter-spacing:1.750px;">889.86</span>
<svg style="left:882.2px;top:363.2px" width="18" height="23" viewBox="0 0 18 23" preserveAspectRatio="none"><path d="M0.5 1.4 H17.5 M0.5 7.6 H17.5 M0.5 1.4 H6 C10.2 1.4 12.3 4 12.3 7.6 C12.3 11.2 10.2 13.6 6 13.6 H1.2 L13.2 22.4" fill="none" stroke="#2c3a42" stroke-width="2.3" stroke-linejoin="miter"/></svg>
<span class="t" style="left:900.09px;top:357.87px;font-size:33px;line-height:33px;font-weight:400;color:#2c3a42;letter-spacing:-1.035px;">16,017.51</span>
<span class="t" style="left:146.98px;top:412.93px;font-size:16.5px;line-height:16.5px;font-weight:700;color:#1c2b33;letter-spacing:-0.245px;">Website leads</span>
<div class="a" style="left:201px;top:456.47px;width:979px;height:1.2px;background:#dfe1e4"></div>
<span class="t" style="left:183.60px;top:450.30px;font-size:15px;line-height:15px;font-weight:400;color:#1c2b33;letter-spacing:0.000px;">5</span>
<div class="a" style="left:201px;top:490.04px;width:979px;height:1.2px;background:#dfe1e4"></div>
<span class="t" style="left:183.86px;top:483.66px;font-size:15px;line-height:15px;font-weight:400;color:#1c2b33;letter-spacing:0.000px;">4</span>
<div class="a" style="left:201px;top:523.61px;width:979px;height:1.2px;background:#dfe1e4"></div>
<span class="t" style="left:183.63px;top:517.02px;font-size:15px;line-height:15px;font-weight:400;color:#1c2b33;letter-spacing:0.000px;">3</span>
<div class="a" style="left:201px;top:557.18px;width:979px;height:1.2px;background:#dfe1e4"></div>
<span class="t" style="left:183.45px;top:550.38px;font-size:15px;line-height:15px;font-weight:400;color:#1c2b33;letter-spacing:0.000px;">2</span>
<div class="a" style="left:201px;top:590.75px;width:979px;height:1.2px;background:#dfe1e4"></div>
<span class="t" style="left:184.06px;top:583.74px;font-size:15px;line-height:15px;font-weight:400;color:#1c2b33;letter-spacing:0.000px;">1</span>
<div class="a" style="left:201px;top:624.32px;width:979px;height:1.2px;background:#dfe1e4"></div>
<span class="t" style="left:183.61px;top:617.10px;font-size:15px;line-height:15px;font-weight:400;color:#1c2b33;letter-spacing:0.000px;">0</span>
<svg style="left:980px;top:450px" width="30" height="185" viewBox="980 450 30 185"><path d="M986.1 617 L987.6 524 L989.2 524 L989.4 457 L991.4 457 L992 617Z" fill="#34c3c9"/><path d="M994.8 617 L994.3 457 L996.1 457 L997 590 L998 590 L998.8 617Z" fill="#34c3c9"/><g fill="none" stroke="#0a0a0a" stroke-width="1.5" stroke-linecap="round"><path d="M982.6 622.6 A5.2 5.2 0 0 0 984 630.2"/><path d="M985.2 622.2 A5.2 5.2 0 0 0 986.8 630.2"/><path d="M988 622 A5.2 5.2 0 0 0 989.8 630.2"/><path d="M982 630.6 H991.6" stroke-width="1.3"/><path d="M991.4 629.6 A5.4 5.4 0 0 1 996.6 620.2" /><path d="M999.6 622 L999.8 622.3 M1000.8 625.2 A5.4 5.4 0 0 1 998.6 630.2"/><path d="M994.2 626 L997.8 622.6" stroke-width="1.7"/></g></svg>
<span class="t" style="left:192.36px;top:632.10px;font-size:15px;line-height:15px;font-weight:400;color:#1c2b33;letter-spacing:-0.068px;">10 Aug 2022</span>
<span class="t" style="left:427.16px;top:632.10px;font-size:15px;line-height:15px;font-weight:400;color:#1c2b33;letter-spacing:-0.002px;">19 May 2023</span>
<span class="t" style="left:664.55px;top:632.10px;font-size:15px;line-height:15px;font-weight:400;color:#1c2b33;letter-spacing:0.066px;">25 Feb 2024</span>
<span class="t" style="left:905.73px;top:632.10px;font-size:15px;line-height:15px;font-weight:400;color:#1c2b33;letter-spacing:-0.001px;">3 Dec 2024</span>
<span class="t" style="left:1137.16px;top:632.10px;font-size:15px;line-height:15px;font-weight:400;color:#1c2b33;letter-spacing:-0.031px;">10 Sep 2025</span>
<div class="a" style="left:104px;top:660px;width:1164px;height:24px;overflow:hidden"><div style="position:absolute;left:-104px;top:-660px;width:1280px;height:720px">
<div class="a" style="left:540px;top:670px;width:16px;height:15px;border-radius:2px;background:#34c3c9"></div>
<span class="t" style="left:564.93px;top:670.30px;font-size:15px;line-height:15px;font-weight:400;color:#1c2b33;letter-spacing:-0.167px;">Website leads</span>
<svg style="left:689.2px;top:669px" width="19" height="19" viewBox="-9.5 -9.5 19 19"><path d="M-4.2 6 A7.3 7.3 0 0 1 3.2 -6.6" fill="none" stroke="#111" stroke-width="1.7" stroke-linecap="round"/><path d="M6.8 -2.8 A7.3 7.3 0 0 1 4.2 6" fill="none" stroke="#111" stroke-width="1.7" stroke-linecap="round"/><path d="M-1.4 1.8 L5.6 -5.8" stroke="#111" stroke-width="2.2" stroke-linecap="round"/></svg>
<span class="t" style="left:715.27px;top:670.30px;font-size:15px;line-height:15px;font-weight:400;color:#1c2b33;letter-spacing:0.183px;">Historical edits</span>
</div></div>
</body></html>
